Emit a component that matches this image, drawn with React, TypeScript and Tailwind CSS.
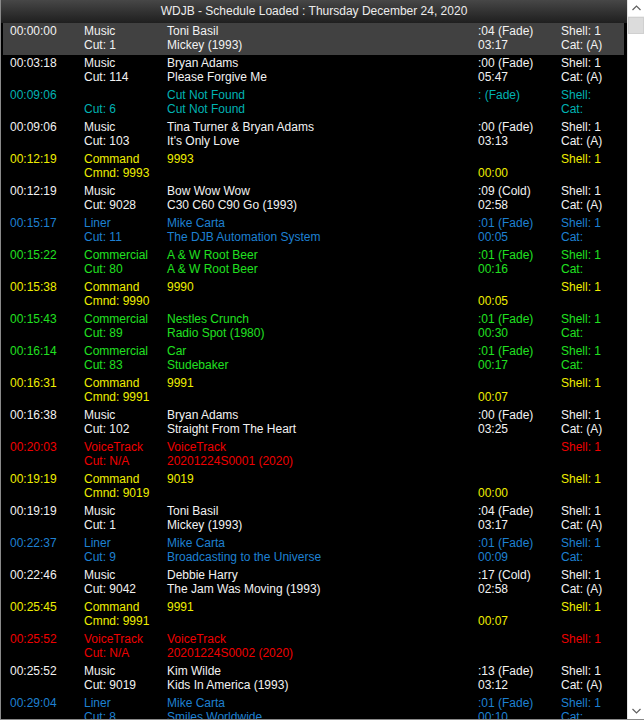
import React from "react";

type Row = {
  color: string;
  time: string;
  type: [string, string];
  title: [string, string];
  dur: [string, string];
  shell: [string, string];
};

const WHITE = "text-[#f2f2f2]";
const CYAN = "text-[#00b2b2]";
const YELLOW = "text-[#eeee00]";
const BLUE = "text-[#1e80d2]";
const GREEN = "text-[#20e020]";
const RED = "text-[#ee0000]";

const music = (time: string, cut: string, artist: string, song: string, intro: string, len: string): Row => ({
  color: WHITE,
  time,
  type: ["Music", `Cut: ${cut}`],
  title: [artist, song],
  dur: [intro, len],
  shell: ["Shell: 1", "Cat: (A)"],
});

const command = (time: string, cmd: string, len: string): Row => ({
  color: YELLOW,
  time,
  type: ["Command", `Cmnd: ${cmd}`],
  title: [cmd, ""],
  dur: ["", len],
  shell: ["Shell: 1", ""],
});

const spot = (color: string, time: string, kind: string, cut: string, a: string, b: string, len: string): Row => ({
  color,
  time,
  type: [kind, `Cut: ${cut}`],
  title: [a, b],
  dur: [":01 (Fade)", len],
  shell: ["Shell: 1", "Cat:"],
});

const voice = (time: string, file: string): Row => ({
  color: RED,
  time,
  type: ["VoiceTrack", "Cut: N/A"],
  title: ["VoiceTrack", file],
  dur: ["", ""],
  shell: ["Shell: 1", ""],
});

const rows: Row[] = [
  music("00:00:00", "1", "Toni Basil", "Mickey (1993)", ":04 (Fade)", "03:17"),
  music("00:03:18", "114", "Bryan Adams", "Please Forgive Me", ":00 (Fade)", "05:47"),
  {
    color: CYAN,
    time: "00:09:06",
    type: ["", "Cut: 6"],
    title: ["Cut Not Found", "Cut Not Found"],
    dur: [": (Fade)", ""],
    shell: ["Shell:", "Cat:"],
  },
  music("00:09:06", "103", "Tina Turner & Bryan Adams", "It's Only Love", ":00 (Fade)", "03:13"),
  command("00:12:19", "9993", "00:00"),
  music("00:12:19", "9028", "Bow Wow Wow", "C30 C60 C90 Go (1993)", ":09 (Cold)", "02:58"),
  spot(BLUE, "00:15:17", "Liner", "11", "Mike Carta", "The DJB Automation System", "00:05"),
  spot(GREEN, "00:15:22", "Commercial", "80", "A & W Root Beer", "A & W Root Beer", "00:16"),
  command("00:15:38", "9990", "00:05"),
  spot(GREEN, "00:15:43", "Commercial", "89", "Nestles Crunch", "Radio Spot (1980)", "00:30"),
  spot(GREEN, "00:16:14", "Commercial", "83", "Car", "Studebaker", "00:17"),
  command("00:16:31", "9991", "00:07"),
  music("00:16:38", "102", "Bryan Adams", "Straight From The Heart", ":00 (Fade)", "03:25"),
  voice("00:20:03", "20201224S0001 (2020)"),
  command("00:19:19", "9019", "00:00"),
  music("00:19:19", "1", "Toni Basil", "Mickey (1993)", ":04 (Fade)", "03:17"),
  spot(BLUE, "00:22:37", "Liner", "9", "Mike Carta", "Broadcasting to the Universe", "00:09"),
  music("00:22:46", "9042", "Debbie Harry", "The Jam Was Moving (1993)", ":17 (Cold)", "02:58"),
  command("00:25:45", "9991", "00:07"),
  voice("00:25:52", "20201224S0002 (2020)"),
  music("00:25:52", "9019", "Kim Wilde", "Kids In America (1993)", ":13 (Fade)", "03:12"),
  spot(BLUE, "00:29:04", "Liner", "8", "Mike Carta", "Smiles Worldwide", "00:10"),
];

const Chevron = ({ up }: { up?: boolean }) => (
  <svg width="9" height="6" viewBox="0 0 9 6">
    <polyline
      points={up ? "0.5,5 4.5,1 8.5,5" : "0.5,1 4.5,5 8.5,1"}
      fill="none"
      stroke="#606060"
      strokeWidth="1.2"
    />
  </svg>
);

const ScheduleRow = ({ row, selected }: { row: Row; selected?: boolean }) => (
  <div
    className={`ml-[2px] mr-[3px] h-[32px] shrink-0 pl-[7px] pt-[1px] grid grid-cols-[74px_83px_311px_83px_1fr] text-[12px] leading-[14px] whitespace-nowrap ${row.color} ${
      selected ? "bg-[#414141]" : ""
    }`}
  >
    <div>{row.time}</div>
    <div className="flex flex-col">
      <span className="h-[14px]">{row.type[0]}</span>
      <span className="h-[14px]">{row.type[1]}</span>
    </div>
    <div className="flex flex-col">
      <span className="h-[14px]">{row.title[0]}</span>
      <span className="h-[14px]">{row.title[1]}</span>
    </div>
    <div className="flex flex-col">
      <span className="h-[14px]">{row.dur[0]}</span>
      <span className="h-[14px]">{row.dur[1]}</span>
    </div>
    <div className="flex flex-col">
      <span className="h-[14px]">{row.shell[0]}</span>
      <span className="h-[14px]">{row.shell[1]}</span>
    </div>
  </div>
);

export default function App() {
  return (
    <div
      className="w-[644px] h-[720px] flex border-l border-b border-[#8a8a8a] bg-black overflow-hidden"
      style={{ fontFamily: '"Liberation Sans", Arial, sans-serif' }}
    >
      <div className="flex-1 flex flex-col min-w-0 overflow-hidden">
        <div className="h-[23px] shrink-0 pb-[2px] flex items-center justify-center bg-gradient-to-b from-[#474747] to-[#1f1f1f] text-[12px] text-[#ececec]">
          WDJB - Schedule Loaded : Thursday December 24, 2020
        </div>
        <div className="flex flex-col">
          {rows.map((r, i) => (
            <ScheduleRow key={i} row={r} selected={i === 0} />
          ))}
        </div>
      </div>
      <div className="w-[17px] shrink-0 flex flex-col bg-white border-l border-[#e6e6e6]">
        <div className="h-[17px] flex items-center justify-center border-b border-[#f0f0f0]">
          <Chevron up />
        </div>
        <div className="h-[17px] bg-[#dcdcdc] border border-[#d0d0d0]" />
        <div className="flex-1" />
        <div className="h-[17px] flex items-center justify-center">
          <Chevron />
        </div>
      </div>
    </div>
  );
}
